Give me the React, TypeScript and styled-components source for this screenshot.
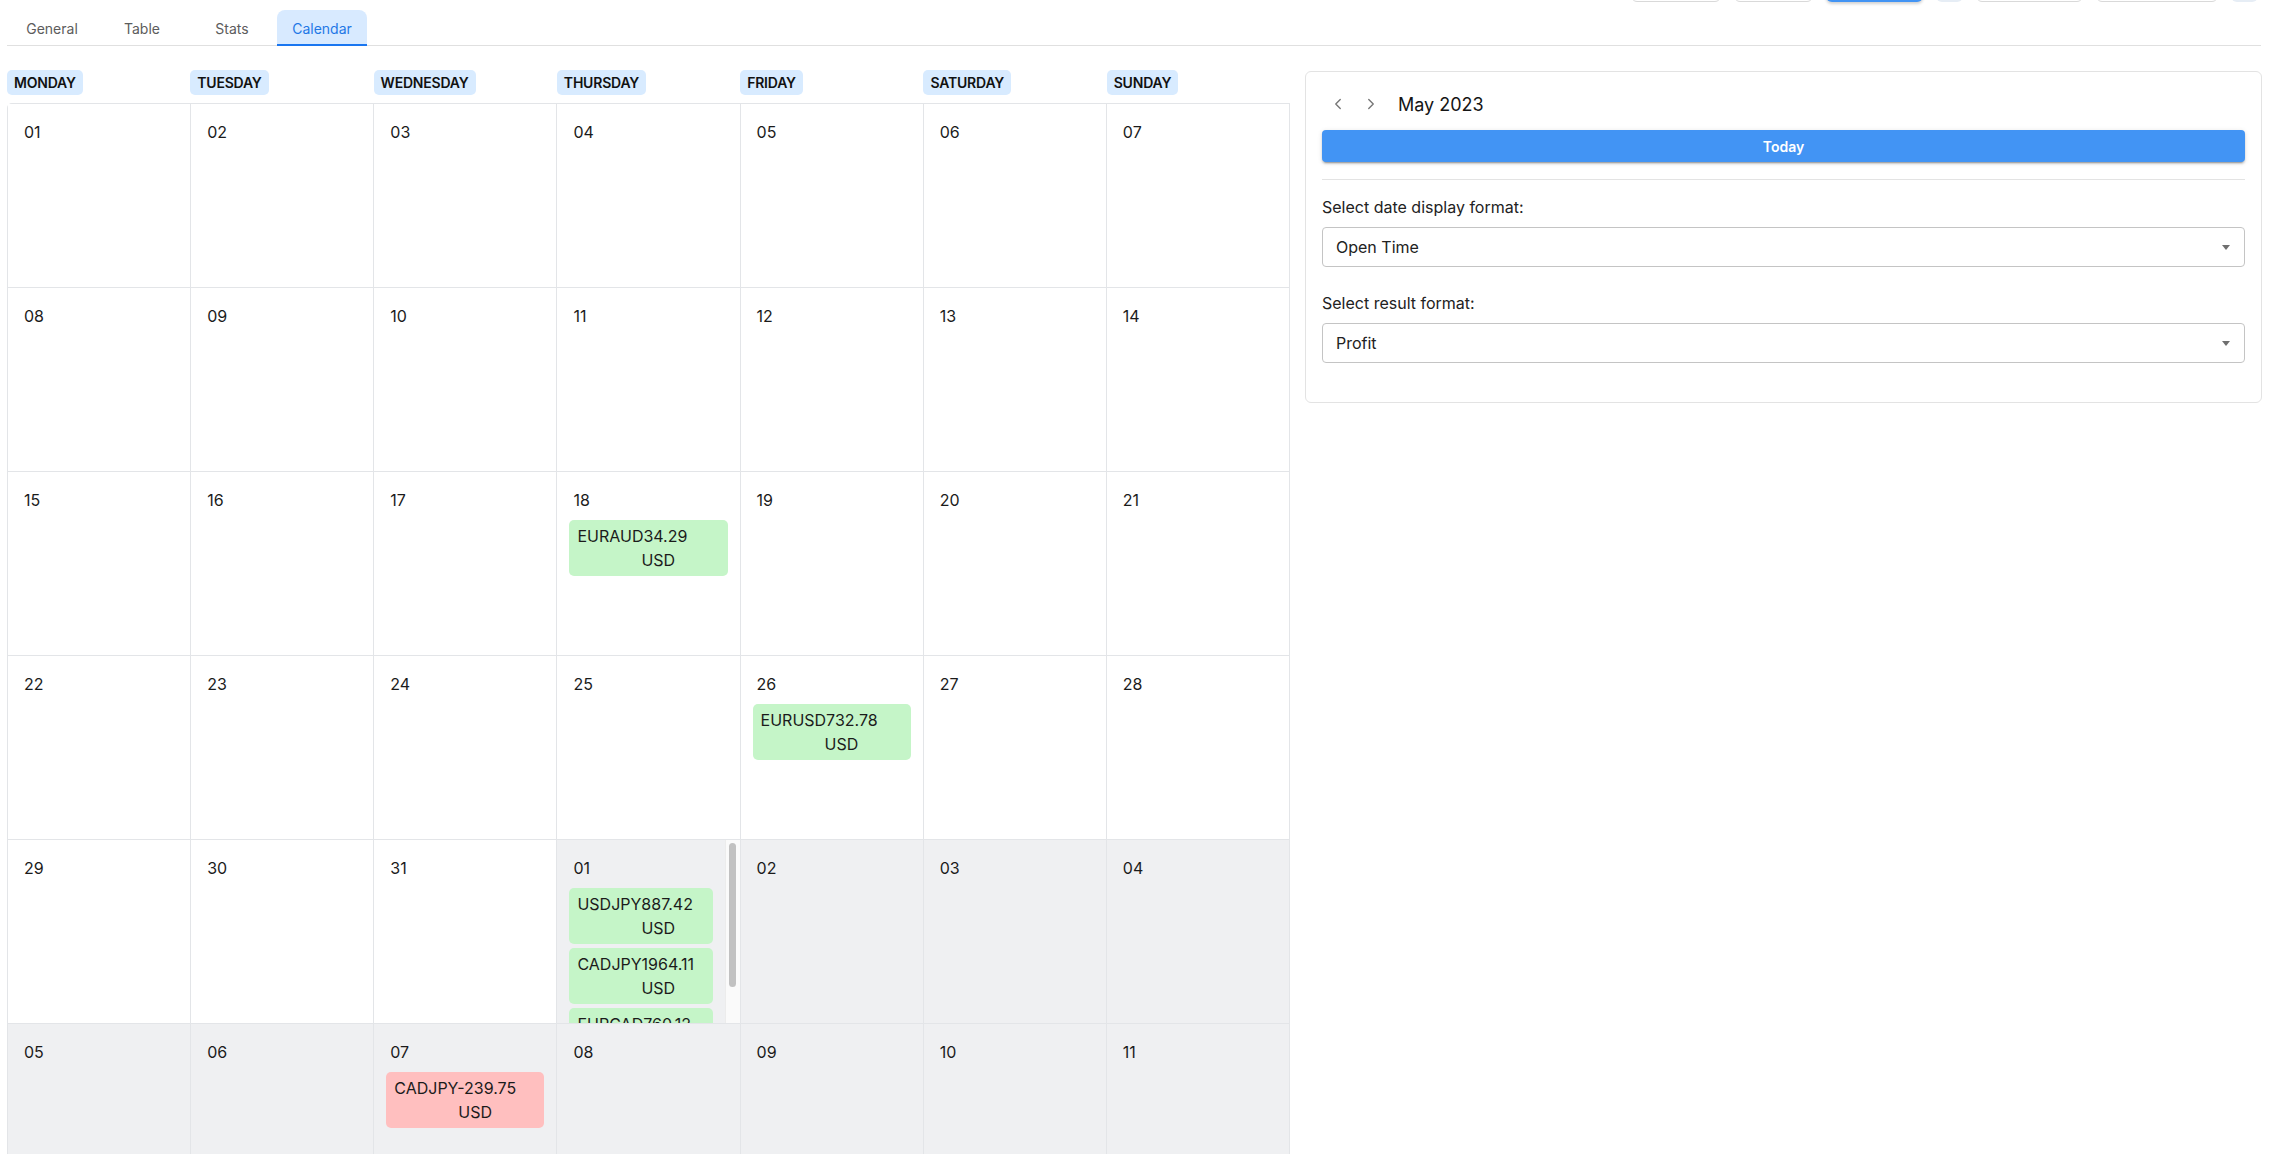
import React from "react";
import styled, { createGlobalStyle, css } from "styled-components";
import { ChevronLeft, ChevronRight } from "lucide-react";

const GlobalStyle = createGlobalStyle`
  html, body { margin: 0; padding: 0; background: #ffffff; overflow: hidden; }
  body { font-family: Inter, "Noto Sans", sans-serif; color: #1b1b1b; }
  * { box-sizing: border-box; }
`;

const Page = styled.div`
  padding: 0 13px 0 7px;
  height: 100vh;
  overflow: hidden;
`;

const TopBar = styled.div`
  display: flex;
  justify-content: flex-end;
  gap: 13px;
  height: 36px;
  margin-top: -34px;
  padding-right: 3px;
`;

type ToolVariant = "outline" | "primary" | "soft";

const ToolButton = styled.div<{ $w: number; $variant: ToolVariant }>`
  width: ${(p) => p.$w}px;
  height: 36px;
  border-radius: 6px;
  ${(p) =>
    p.$variant === "outline" &&
    css`
      border: 1px solid #d9d9d9;
      background: #ffffff;
    `}
  ${(p) =>
    p.$variant === "primary" &&
    css`
      background: #4294f4;
      box-shadow: 0 2px 3px rgba(0, 0, 0, 0.18);
    `}
  ${(p) =>
    p.$variant === "soft" &&
    css`
      background: #e6edf5;
    `}
`;

const TabList = styled.div`
  display: flex;
  align-items: flex-start;
  height: 36px;
  margin-top: 8px;
  border-bottom: 1px solid #e0e0e0;
`;

const Tab = styled.div<{ $active?: boolean }>`
  width: 90px;
  height: 36px;
  display: flex;
  align-items: center;
  justify-content: center;
  font-size: 14px;
  color: #5c5c5c;
  border-radius: 8px 8px 0 0;
  ${(p) =>
    p.$active &&
    css`
      background: #d8eaff;
      color: #1f78e6;
      border-bottom: 2px solid #1a76f0;
      padding-top: 2px;
    `}
`;

const Content = styled.div`
  display: grid;
  grid-template-columns: 1283px 957px;
  column-gap: 15px;
  padding-top: 24px;
  align-items: start;
`;

const CalendarColumn = styled.div`
  display: flex;
  flex-direction: column;
`;

const DayHeaderRow = styled.div`
  display: grid;
  grid-template-columns: repeat(7, 1fr);
  height: 25px;
  margin-bottom: 8px;
`;

const DayChip = styled.div`
  justify-self: start;
  height: 25px;
  padding: 0 7px;
  display: flex;
  align-items: center;
  border-radius: 5px;
  background: #d8ebff;
  font-size: 14px;
  font-weight: 600;
  color: #111111;
  letter-spacing: -0.2px;
`;

const Grid = styled.div`
  display: grid;
  grid-template-columns: repeat(7, 1fr);
  grid-auto-rows: 184px;
  border-top: 1px solid #e3e5e8;
  border-left: 1px solid #e3e5e8;
  border-top-left-radius: 5px;
`;

const Cell = styled.div<{ $muted?: boolean; $scroll?: boolean }>`
  position: relative;
  border-right: 1px solid #e3e5e8;
  border-bottom: 1px solid #e3e5e8;
  background: ${(p) => (p.$muted ? "#eff0f2" : "#ffffff")};
  padding: 16px ${(p) => (p.$scroll ? "27px" : "12px")} 12px 12px;
  overflow: hidden;
`;

const ScrollTrack = styled.div`
  position: absolute;
  top: 0;
  right: 0;
  bottom: 0;
  width: 15px;
  background: #fafafa;
  border-left: 1px solid #ececec;
  padding: 3px 4px 0 3px;
`;

const ScrollThumb = styled.div`
  height: 144px;
  border-radius: 4px;
  background: #c1c1c1;
`;

const DayNumber = styled.div`
  font-size: 16px;
  line-height: 24px;
  padding-left: 4px;
  margin-bottom: 8px;
  color: #1b1b1b;
`;

const ChipList = styled.div`
  display: flex;
  flex-direction: column;
  gap: 4px;
`;

const TradeChip = styled.div<{ $loss?: boolean }>`
  background: ${(p) => (p.$loss ? "#ffbfbf" : "#c5f5c8")};
  border-radius: 5px;
  padding: 4px 8px;
  font-size: 16px;
  line-height: 24px;
  color: #1b1b1b;
  white-space: nowrap;
  overflow: hidden;
`;

const Currency = styled.span`
  display: block;
  padding-left: 64px;
`;

const SideCard = styled.div`
  margin-top: 1px;
  border: 1px solid #e3e3e3;
  border-radius: 6px;
  padding: 15px 16px 16px 16px;
`;

const MonthHeader = styled.div`
  display: flex;
  align-items: center;
  height: 34px;
`;

const NavButton = styled.button`
  width: 32px;
  height: 32px;
  padding: 0;
  margin: 0 1px 0 0;
  border: none;
  background: transparent;
  display: flex;
  align-items: center;
  justify-content: center;
  color: #767676;
`;

const MonthTitle = styled.div`
  margin-left: 10px;
  font-size: 18px;
  color: #151515;
`;

const TodayButton = styled.button`
  width: 100%;
  height: 32px;
  margin-top: 9px;
  border: none;
  border-radius: 4px;
  background: #4294f4;
  color: #ffffff;
  font-family: Inter, "Noto Sans", sans-serif;
  font-size: 14px;
  font-weight: 600;
  box-shadow: 0 3px 1px -2px rgba(0, 0, 0, 0.2), 0 2px 2px 0 rgba(0, 0, 0, 0.14),
    0 1px 5px 0 rgba(0, 0, 0, 0.12);
`;

const Divider = styled.div`
  height: 1px;
  background: #e3e3e3;
  margin: 17px 0 0 0;
`;

const FormGroup = styled.div<{ $first?: boolean }>`
  margin-top: ${(p) => (p.$first ? "15px" : "24px")};
`;

const FieldLabel = styled.div`
  font-size: 16px;
  line-height: 24px;
  color: #222222;
  margin-bottom: 8px;
`;

const SelectBox = styled.div`
  height: 40px;
  border: 1px solid #c4c4c4;
  border-radius: 4px;
  padding: 0 14px 0 13px;
  display: flex;
  align-items: center;
  justify-content: space-between;
  font-size: 16px;
  color: #222222;
`;

const Caret = styled.span`
  width: 0;
  height: 0;
  border-left: 4px solid transparent;
  border-right: 4px solid transparent;
  border-top: 5px solid #6f6f6f;
`;

const CardBottom = styled.div`
  height: 23px;
`;

type Trade = { symbol: string; profit: number };
type Day = { label: string; muted: boolean; trades: Trade[] };

const tradesByKey: Record<string, Trade[]> = {
  "5-18": [{ symbol: "EURAUD", profit: 34.29 }],
  "5-26": [{ symbol: "EURUSD", profit: 732.78 }],
  "6-1": [
    { symbol: "USDJPY", profit: 887.42 },
    { symbol: "CADJPY", profit: 1964.11 },
    { symbol: "EURCAD", profit: 760.12 },
  ],
  "6-7": [{ symbol: "CADJPY", profit: -239.75 }],
};

const days: Day[] = [];
for (let d = 1; d <= 31; d++) {
  days.push({
    label: String(d).padStart(2, "0"),
    muted: false,
    trades: tradesByKey[`5-${d}`] || [],
  });
}
for (let d = 1; d <= 11; d++) {
  days.push({
    label: String(d).padStart(2, "0"),
    muted: true,
    trades: tradesByKey[`6-${d}`] || [],
  });
}

const weekdays = [
  "MONDAY",
  "TUESDAY",
  "WEDNESDAY",
  "THURSDAY",
  "FRIDAY",
  "SATURDAY",
  "SUNDAY",
];

const tools: { w: number; v: ToolVariant }[] = [
  { w: 90, v: "outline" },
  { w: 79, v: "outline" },
  { w: 97, v: "primary" },
  { w: 27, v: "soft" },
  { w: 107, v: "outline" },
  { w: 122, v: "outline" },
  { w: 27, v: "soft" },
];

export default function App() {
  return (
    <>
      <GlobalStyle />
      <Page>
        <TopBar>
          {tools.map((t, i) => (
            <ToolButton key={i} $w={t.w} $variant={t.v} />
          ))}
        </TopBar>
        <TabList>
          <Tab>General</Tab>
          <Tab>Table</Tab>
          <Tab>Stats</Tab>
          <Tab $active>Calendar</Tab>
        </TabList>
        <Content>
          <CalendarColumn>
            <DayHeaderRow>
              {weekdays.map((w) => (
                <DayChip key={w}>{w}</DayChip>
              ))}
            </DayHeaderRow>
            <Grid>
              {days.map((day, i) => {
                const overflows = day.trades.length > 2;
                return (
                  <Cell key={i} $muted={day.muted} $scroll={overflows}>
                    <DayNumber>{day.label}</DayNumber>
                    {day.trades.length > 0 && (
                      <ChipList>
                        {day.trades.map((t, j) => (
                          <TradeChip key={j} $loss={t.profit < 0}>
                            {t.symbol}
                            {t.profit.toFixed(2)}
                            <Currency>USD</Currency>
                          </TradeChip>
                        ))}
                      </ChipList>
                    )}
                    {overflows && (
                      <ScrollTrack>
                        <ScrollThumb />
                      </ScrollTrack>
                    )}
                  </Cell>
                );
              })}
            </Grid>
          </CalendarColumn>
          <SideCard>
            <MonthHeader>
              <NavButton aria-label="previous month">
                <ChevronLeft size={18} strokeWidth={1.8} />
              </NavButton>
              <NavButton aria-label="next month">
                <ChevronRight size={18} strokeWidth={1.8} />
              </NavButton>
              <MonthTitle>May 2023</MonthTitle>
            </MonthHeader>
            <TodayButton>Today</TodayButton>
            <Divider />
            <FormGroup $first>
              <FieldLabel>Select date display format:</FieldLabel>
              <SelectBox>
                <span>Open Time</span>
                <Caret />
              </SelectBox>
            </FormGroup>
            <FormGroup>
              <FieldLabel>Select result format:</FieldLabel>
              <SelectBox>
                <span>Profit</span>
                <Caret />
              </SelectBox>
            </FormGroup>
            <CardBottom />
          </SideCard>
        </Content>
      </Page>
    </>
  );
}
